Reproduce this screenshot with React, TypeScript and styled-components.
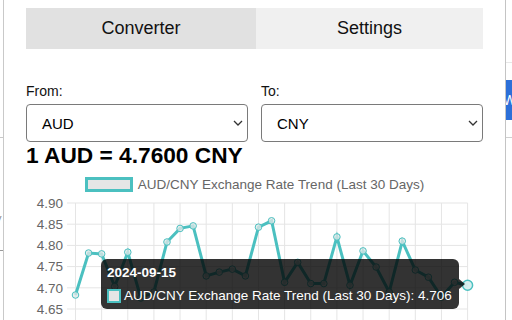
import React from 'react'
import styled, { createGlobalStyle } from 'styled-components'

const GlobalStyle = createGlobalStyle`
  html, body {
    margin: 0;
    padding: 0;
    background: #ffffff;
  }
  body {
    font-family: "Liberation Sans", Arial, Helvetica, sans-serif;
    color: #000;
  }
`

const Page = styled.div`
  display: flex;
  width: 512px;
  height: 320px;
  overflow: hidden;
  background: #ffffff;
`

const BackdropStrip = styled.div<{ $width: number }>`
  width: ${(p) => p.$width}px;
  flex-shrink: 0;
  display: flex;
  flex-direction: column;
  overflow: hidden;
  background: #ffffff;
`

const StripGap = styled.div<{ $height: number }>`
  height: ${(p) => p.$height}px;
  flex-shrink: 0;
`

const StripRule = styled.div<{ $color: string }>`
  height: 1px;
  flex-shrink: 0;
  background: ${(p) => p.$color};
`

const StripButton = styled.div`
  height: 40px;
  flex-shrink: 0;
  background: #2c6fd8;
  color: #ffffff;
  font-size: 14px;
  line-height: 40px;
  white-space: nowrap;
  margin-left: -3px;
`

const StripGlyph = styled.div`
  font-size: 11px;
  line-height: 12px;
  color: #888;
  margin-left: -4px;
`

const Popup = styled.div`
  width: 457px;
  flex-shrink: 0;
  padding: 8px 22px 0 22px;
  border-left: 1px solid #c9c9c9;
  border-right: 1px solid #c4c4c4;
  background: #ffffff;
  display: flex;
  flex-direction: column;
`

const Tabs = styled.div`
  display: grid;
  grid-template-columns: 230px 1fr;
  height: 41px;
`

const Tab = styled.div<{ $active?: boolean }>`
  display: flex;
  align-items: center;
  justify-content: center;
  background: ${(p) => (p.$active ? '#e1e1e1' : '#f0f0f0')};
  font-size: 18px;
  color: #111;
`

const FieldRow = styled.div`
  display: grid;
  grid-template-columns: 1fr 1fr;
  column-gap: 13px;
  margin-top: 34px;
`

const Field = styled.div`
  display: flex;
  flex-direction: column;
`

const FieldLabel = styled.div`
  font-size: 14px;
  line-height: 16px;
  color: #111;
  margin-bottom: 5px;
`

const SelectBox = styled.div`
  height: 38px;
  box-sizing: border-box;
  border: 1px solid #7a7a7a;
  border-radius: 4px;
  display: flex;
  align-items: center;
  justify-content: space-between;
  padding: 0 4px 0 15px;
  font-size: 15px;
  color: #000;
`

const RateLine = styled.div`
  margin-top: 1px;
  font-size: 22.7px;
  line-height: 25px;
  font-weight: 700;
  color: #000;
`

const Legend = styled.div`
  display: flex;
  justify-content: center;
  align-items: center;
  gap: 5px;
  margin-top: 9px;
  height: 15px;
`

const LegendSwatch = styled.div`
  width: 48px;
  height: 15px;
  box-sizing: border-box;
  border: 3px solid rgb(75, 192, 192);
  background: #e6e6e6;
`

const LegendLabel = styled.div`
  font-size: 13.5px;
  line-height: 15px;
  color: #666;
  white-space: nowrap;
`

const PlotWrap = styled.div`
  position: relative;
  height: 128px;
`

const Tooltip = styled.div`
  position: absolute;
  left: 75px;
  top: 67px;
  width: 358px;
  height: 50px;
  box-sizing: border-box;
  padding: 6px 6px 5px 6px;
  border-radius: 6px;
  background: rgba(0, 0, 0, 0.8);
  color: #ffffff;
  font-size: 13.5px;
  line-height: 16px;

  &::after {
    content: '';
    position: absolute;
    right: -6px;
    top: 20px;
    border-top: 5px solid transparent;
    border-bottom: 5px solid transparent;
    border-left: 6px solid rgba(0, 0, 0, 0.8);
  }
`

const TooltipTitle = styled.div`
  font-weight: 700;
  margin-bottom: 7px;
`

const TooltipBody = styled.div`
  display: flex;
  align-items: center;
  gap: 3px;
  white-space: nowrap;
`

const TooltipSwatch = styled.span`
  width: 14px;
  height: 14px;
  box-sizing: border-box;
  border: 2px solid rgb(75, 192, 192);
  background: #e6e6e6;
  flex-shrink: 0;
`

const Chevron = () => (
  <svg width="10" height="6" viewBox="0 0 10 6">
    <path d="M1 1 L5 5 L9 1" fill="none" stroke="#333" strokeWidth="1.3" />
  </svg>
)

const rates = [
  4.683, 4.782, 4.78, 4.703, 4.784, 4.676, 4.69, 4.808, 4.84, 4.846, 4.728,
  4.737, 4.744, 4.728, 4.843, 4.858, 4.713, 4.76, 4.71, 4.71, 4.82, 4.706,
  4.787, 4.749, 4.69, 4.81, 4.742, 4.725, 4.678, 4.713, 4.706,
]

const ticks = [4.9, 4.85, 4.8, 4.75, 4.7, 4.65]
const toY = (v: number) => 11 + (4.9 - v) * 424
const toX = (i: number) => 49.5 + i * 13.07
const teal = 'rgb(75, 192, 192)'

const RateChart = () => {
  const last = rates.length - 1
  const path = rates
    .map((v, i) => `${i === 0 ? 'M' : 'L'}${toX(i).toFixed(1)} ${toY(v).toFixed(1)}`)
    .join(' ')

  return (
    <svg width="457" height="128" viewBox="0 0 457 128">
      {ticks.map((t) => (
        <g key={t}>
          <line x1="41" x2={toX(last)} y1={toY(t)} y2={toY(t)} stroke="#e5e5e5" strokeWidth="1" />
          <text
            x="37"
            y={toY(t) + 4.8}
            textAnchor="end"
            fontSize="13.5"
            fill="#666"
            fontFamily='"Liberation Sans", Arial, sans-serif'
          >
            {t.toFixed(2)}
          </text>
        </g>
      ))}
      {rates.map((_, i) =>
        i % 2 === 0 ? (
          <line key={i} x1={toX(i)} x2={toX(i)} y1={toY(4.9)} y2="128" stroke="#e5e5e5" strokeWidth="1" />
        ) : null
      )}
      <path d={path} fill="none" stroke={teal} strokeWidth="3" strokeLinejoin="miter" strokeMiterlimit="10" />
      {rates.slice(0, last).map((v, i) => (
        <circle key={i} cx={toX(i)} cy={toY(v)} r="3.3" fill="rgba(225,232,232,0.75)" stroke={teal} strokeWidth="1" />
      ))}
      <circle cx={toX(last)} cy={toY(rates[last])} r="5" fill="rgba(215,238,238,0.95)" stroke={teal} strokeWidth="1.5" />
    </svg>
  )
}

export default function App() {
  return (
    <>
      <GlobalStyle />
      <Page>
        <BackdropStrip $width={3}>
          <StripGap $height={137} />
          <StripRule $color="#c8c8c8" />
          <StripGap $height={74} />
          <StripGlyph>y</StripGlyph>
          <StripGap $height={26} />
          <StripRule $color="#999" />
        </BackdropStrip>

        <Popup>
          <Tabs>
            <Tab $active>Converter</Tab>
            <Tab>Settings</Tab>
          </Tabs>

          <FieldRow>
            <Field>
              <FieldLabel>From:</FieldLabel>
              <SelectBox>
                AUD
                <Chevron />
              </SelectBox>
            </Field>
            <Field>
              <FieldLabel>To:</FieldLabel>
              <SelectBox>
                CNY
                <Chevron />
              </SelectBox>
            </Field>
          </FieldRow>

          <RateLine>1 AUD = 4.7600 CNY</RateLine>

          <Legend>
            <LegendSwatch />
            <LegendLabel>AUD/CNY Exchange Rate Trend (Last 30 Days)</LegendLabel>
          </Legend>

          <PlotWrap>
            <RateChart />
            <Tooltip>
              <TooltipTitle>2024-09-15</TooltipTitle>
              <TooltipBody>
                <TooltipSwatch />
                AUD/CNY Exchange Rate Trend (Last 30 Days): 4.706
              </TooltipBody>
            </Tooltip>
          </PlotWrap>
        </Popup>

        <BackdropStrip $width={6}>
          <StripGap $height={62} />
          <StripRule $color="#e8e8e8" />
          <StripGap $height={17} />
          <StripButton>W</StripButton>
          <StripGap $height={17} />
          <StripRule $color="#d0d0d0" />
        </BackdropStrip>
      </Page>
    </>
  )
}
